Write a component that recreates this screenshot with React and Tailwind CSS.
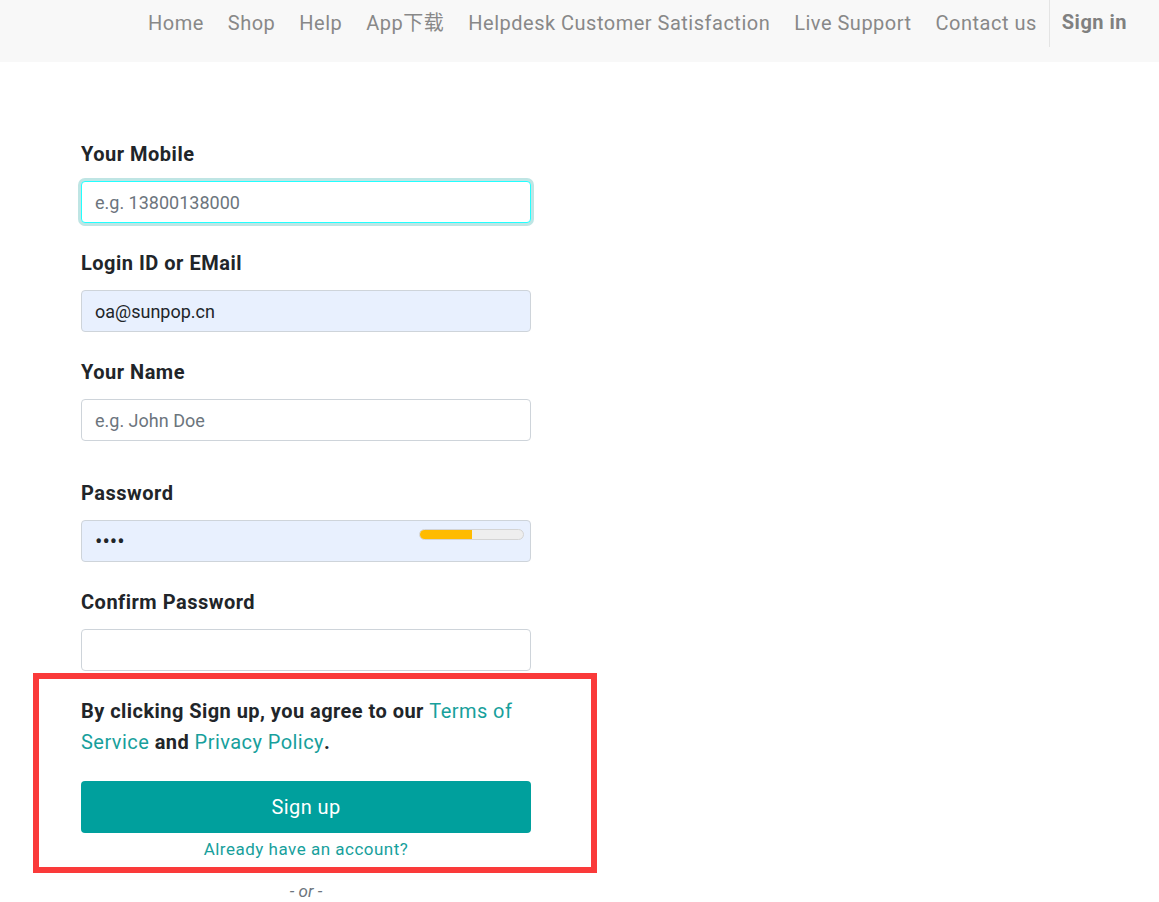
import React from 'react';

const font = { fontFamily: 'Roboto, "Noto Sans CJK SC", sans-serif' };

const navLinks = ['Home', 'Shop', 'Help', 'App下载', 'Helpdesk Customer Satisfaction', 'Live Support', 'Contact us'];

const Field = ({ label, className = '', children }) => (
  <div className={className}>
    <label className="block text-[20px] leading-[30px] font-bold tracking-[0.5px] text-[#212529] mb-[12px]">{label}</label>
    {children}
  </div>
);

const inputBase = 'w-full h-[42px] rounded-[4px] px-[13px] text-[18px] text-[#212529] outline-none placeholder:text-[#6c757d]';

export default function App() {
  return (
    <div style={font} className="min-h-[902px] bg-white">
      <nav className="h-[62px] bg-[#f8f8f8] flex justify-end items-start pr-[21px]">
        <ul className="flex items-center h-[46px] tracking-[0.5px]">
          {navLinks.map(l => (
            <li key={l} className="px-[12px] text-[20px] text-[#888888] leading-[46px]">{l}</li>
          ))}
          <li className="border-l border-[#e4e4e4] h-[48px] pl-[12px] pr-[11px] text-[20px] font-bold text-[#808080] leading-[46px]">Sign in</li>
        </ul>
      </nav>

      <form className="w-[450px] ml-[81px] pt-[77px]">
        <Field label="Your Mobile">
          <input
            className={`${inputBase} bg-white border border-[#22ffff] shadow-[0_0_0_3px_#bfe5e4]`}
            placeholder="e.g. 13800138000"
          />
        </Field>
        <Field label="Login ID or EMail" className="mt-[25px]">
          <input className={`${inputBase} bg-[#e8f0fe] border border-[#ced4da]`} defaultValue="oa@sunpop.cn" />
        </Field>
        <Field label="Your Name" className="mt-[25px]">
          <input className={`${inputBase} bg-white border border-[#ced4da]`} placeholder="e.g. John Doe" />
        </Field>
        <Field label="Password" className="mt-[37px]">
          <div className="relative">
            <input type="password" className={`${inputBase} bg-[#e8f0fe] border border-[#ced4da] text-[22px]`} defaultValue="1234" />
            <div className="absolute right-[7px] top-[9px] w-[105px] h-[11px] rounded-full bg-[#eeeeee] border border-[#d4d4d4] overflow-hidden">
              <div className="h-full w-[52px] bg-[#ffbb00]" />
            </div>
          </div>
        </Field>
        <Field label="Confirm Password" className="mt-[25px]">
          <input type="password" className={`${inputBase} bg-white border border-[#ced4da]`} />
        </Field>

        <div className="mt-[2px] -ml-[48px] -mr-[66px] border-[6px] border-[#fa3a3a] pl-[42px] pr-[60px] pt-[17px] pb-[6px]">
          <p className="text-[20px] leading-[31px] font-bold tracking-[0.45px] text-[#212529]">
            By clicking Sign up, you agree to our <a className="font-normal text-[#17a09c]">Terms of Service</a> and <a className="font-normal text-[#17a09c]">Privacy Policy</a>.
          </p>
          <button type="button" className="mt-[23px] w-full h-[52px] rounded-[4px] bg-[#00a09d] text-white text-[20px] tracking-[0.4px]">Sign up</button>
          <div className="text-center mt-[4px] text-[17px] leading-[24px] tracking-[0.5px] text-[#17a09c]">Already have an account?</div>
        </div>

        <div className="text-center mt-[6px] text-[17px] leading-[24px] italic text-[#6c757d]">- or -</div>
      </form>
    </div>
  );
}
